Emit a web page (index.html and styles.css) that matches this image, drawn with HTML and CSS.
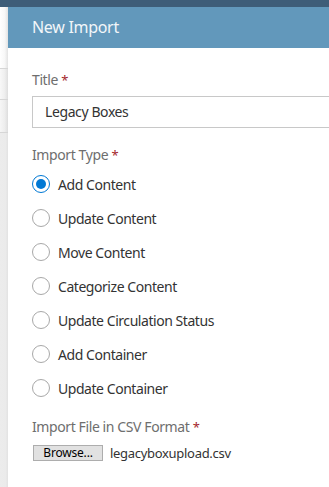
FILE: index.html
```html
<!DOCTYPE html>
<html>
<head>
<meta charset="utf-8">
<link rel="stylesheet" href="styles.css">
</head>
<body>
<div class="topbar"></div>
<div class="main">
  <div class="strip">
    <div class="strip-a"></div>
    <div class="strip-b"></div>
    <div class="strip-c"></div>
    <div class="strip-d"></div>
  </div>
  <div class="dialog">
    <div class="dialog-header">New Import</div>
    <div class="dialog-body">
      <div class="field">
        <div class="label">Title <span class="req">*</span></div>
        <div class="input">Legacy Boxes</div>
      </div>
      <div class="field">
        <div class="label type-label">Import Type <span class="req">*</span></div>
        <div class="radios">
          <div class="radio-row"><span class="radio checked"></span><span>Add Content</span></div>
          <div class="radio-row"><span class="radio"></span><span>Update Content</span></div>
          <div class="radio-row"><span class="radio"></span><span>Move Content</span></div>
          <div class="radio-row"><span class="radio"></span><span>Categorize Content</span></div>
          <div class="radio-row"><span class="radio"></span><span>Update Circulation Status</span></div>
          <div class="radio-row"><span class="radio"></span><span>Add Container</span></div>
          <div class="radio-row"><span class="radio"></span><span>Update Container</span></div>
        </div>
      </div>
      <div class="field file-field">
        <div class="label">Import File in CSV Format <span class="req">*</span></div>
        <div class="file-row"><span class="browse">Browse...</span><span class="filename">legacyboxupload.csv</span></div>
      </div>
    </div>
  </div>
</div>
</body>
</html>
```

FILE: styles.css
```css
html, body {
  margin: 0;
  padding: 0;
  width: 329px;
  height: 487px;
  overflow: hidden;
  background: #fff;
  font-family: "Noto Sans", "Open Sans", sans-serif;
}
.topbar {
  height: 7px;
  background: #3e5d78;
}
.main {
  display: flex;
  height: 480px;
}
.strip {
  width: 8px;
  flex: none;
  display: flex;
  flex-direction: column;
  background: #ececec;
}
.strip-a {
  height: 61px;
  background: linear-gradient(to right, #ffffff 0%, #f7f7f7 60%, #e2e2e2 100%);
  border-bottom: 1px solid #d6d6d6;
}
.strip-b {
  height: 30px;
  background: linear-gradient(to right, #f8f8f8 0%, #eeeeee 60%, #dedede 100%);
  border-bottom: 1px solid #d6d6d6;
}
.strip-c {
  height: 32px;
  background: linear-gradient(to right, #f6f6f6 0%, #ededed 60%, #dddddd 100%);
  border-bottom: 1px solid #d6d6d6;
}
.strip-d {
  flex: 1;
  background: linear-gradient(to right, #ececec 0%, #ebebeb 70%, #e2e2e2 100%);
}
.dialog {
  flex: 1;
  overflow: hidden;
  background: #fff;
}
.dialog-header {
  height: 41px;
  background: #6298bb;
  color: #f2f6f9;
  font-size: 16px;
  line-height: 41px;
  padding-left: 24px;
  letter-spacing: -0.3px;
}
.dialog-body {
  padding: 23px 0 0 24px;
  color: #333;
}
.label {
  font-size: 14px;
  line-height: 18px;
  color: #6e6e6e;
  letter-spacing: -0.4px;
}
.req {
  color: #a4262c;
  font-size: 13px;
}
.input {
  margin-top: 7px;
  width: 320px;
  height: 30px;
  border: 1px solid #c8c8c8;
  box-sizing: content-box;
  padding-left: 12px;
  font-size: 14px;
  line-height: 30px;
  color: #333;
  letter-spacing: -0.4px;
}
.type-label {
  margin-top: 18px;
}
.radios {
  margin-top: 3px;
  display: flex;
  flex-direction: column;
}
.radio-row {
  height: 34px;
  display: flex;
  align-items: center;
  gap: 8px;
  font-size: 14px;
  color: #333;
  letter-spacing: -0.45px;
}
.radio {
  width: 18px;
  height: 18px;
  border: 1px solid #a8a8a8;
  border-radius: 50%;
  box-sizing: border-box;
  display: flex;
  align-items: center;
  justify-content: center;
  flex: none;
}
.radio.checked {
  border-color: #0078d4;
}
.radio.checked::after {
  content: "";
  width: 10px;
  height: 10px;
  border-radius: 50%;
  background: #0078d4;
}
.file-field {
  margin-top: 13px;
}
.file-row {
  margin-top: 8px;
  display: flex;
  align-items: center;
  gap: 7px;
}
.browse {
  margin-left: 1px;
  width: 70px;
  height: 16px;
  box-sizing: border-box;
  background: #e1e1e1;
  border: 1px solid #adadad;
  font-size: 12px;
  line-height: 14px;
  text-align: center;
  color: #000;
  letter-spacing: -0.2px;
}
.filename {
  font-size: 13px;
  color: #333;
  letter-spacing: -0.3px;
}
```
